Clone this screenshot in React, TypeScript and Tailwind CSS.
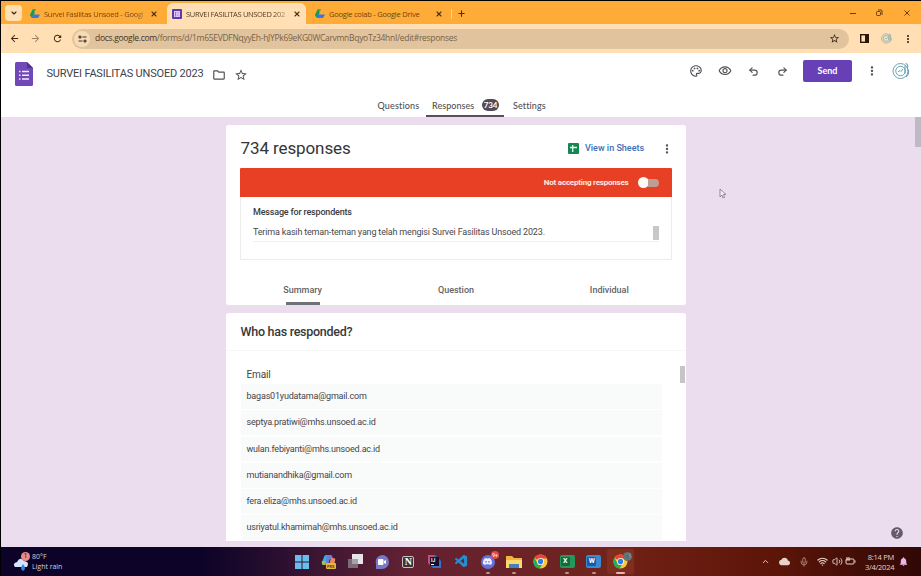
import React from "react";
import { ChevronDown, ChevronUp, Plus, X, Undo2, Redo2, Mic, Wifi, Volume2 } from "lucide-react";
import {
  MdArrowBack,
  MdArrowForward,
  MdRefresh,
  MdStarBorder,
  MdMoreVert,
  MdOutlinePalette,
  MdOutlineVisibility,
  MdOutlineFolder,
  MdHelp,
  MdNotifications,
  MdCloud,
} from "react-icons/md";
import { SiDiscord } from "react-icons/si";
import { VscVscode } from "react-icons/vsc";

const emails = [
  "bagas01yudatama@gmail.com",
  "septya.pratiwi@mhs.unsoed.ac.id",
  "wulan.febiyanti@mhs.unsoed.ac.id",
  "mutianandhika@gmail.com",
  "fera.eliza@mhs.unsoed.ac.id",
  "usriyatul.khamimah@mhs.unsoed.ac.id",
];

function DriveIcon() {
  return (
    <svg className="h-[9px] w-[10px] shrink-0" viewBox="0 0 20 18">
      <path d="M6 0h6L8 10l-5 7-3-5z" fill="#58a83f" />
      <path d="M6 0l-6 12 3 5 6-8z" fill="#159957" />
      <path d="M6 11h14l-4 7H3z" fill="#3478e5" />
    </svg>
  );
}

function FormsFavicon() {
  return (
    <svg className="size-[10px] shrink-0" viewBox="0 0 20 20">
      <rect width="20" height="20" rx="2" fill="#6338ad" />
      <rect x="4" y="4" width="12" height="12" fill="#d9cbf2" />
      <path d="M7 6v9" stroke="#7c58bd" strokeWidth="1.5" />
      <path d="M9 7h6M9 10h6M9 13h6" stroke="#a88bd5" />
    </svg>
  );
}

function SiteSettingsIcon() {
  return (
    <svg className="h-[8px] w-[9px]" viewBox="0 0 18 16" fill="none" stroke="#4a3826" strokeWidth="2.4">
      <circle cx="4" cy="4" r="2" />
      <path d="M9 4h8M1 12h8" />
      <circle cx="14" cy="12" r="2" />
    </svg>
  );
}

function ProfileIcon({ className }: { className: string }) {
  return (
    <svg className={className} viewBox="0 0 36 36" fill="none" stroke="#6aa3b4">
      <circle cx="17" cy="18" r="15" strokeWidth="2" />
      <circle cx="17" cy="18" r="9.5" strokeWidth="2" />
      <path d="M12 20l4-3 2 2 4-5" strokeWidth="2" />
      <path d="M27 3c5 1 6 6 3 9M31 14c4 4 3 12-3 16M26 7v16" strokeWidth="2.2" />
    </svg>
  );
}

function BrowserTabs() {
  return (
    <div className="flex h-[23px] shrink-0 items-end bg-[#ffab37] text-[7.500px]/[10px] text-[#70430e]">
      <div className="mb-[3px] ml-1 flex h-4 w-[17px] items-center justify-center rounded-[4px] bg-[#ffdfb3]">
        <ChevronDown size={8} strokeWidth={3.5} color="#3a2816" />
      </div>
      <div className="ml-[7px] flex h-[21px] w-[138px] items-center pl-px">
        <DriveIcon />
        <span className="ml-[4px] w-[101px] whitespace-nowrap bg-gradient-to-r from-[#70430e] from-90% to-[#c58a42] bg-clip-text font-['Open_Sans',sans-serif] tracking-[-0.24px] text-transparent">
          Survei Fasilitas Unsoed - Googl
        </span>
        <X className="ml-[5px]" size={8} strokeWidth={3.2} color="#503010" />
      </div>
      <div className="flex h-[21px] w-[139px] items-center rounded-t-[6px] bg-[#ffdfb3] pl-[5px]">
        <FormsFavicon />
        <span className="ml-1 w-[102px] whitespace-nowrap bg-gradient-to-r from-[#4b3824] from-85% to-[#c9ac86] bg-clip-text font-['Open_Sans',sans-serif] tracking-[-0.34px] text-transparent">
          SURVEI FASILITAS UNSOED 202
        </span>
        <X className="ml-[5px]" size={8} strokeWidth={3.2} color="#503010" />
      </div>
      <div className="flex h-[21px] items-center pl-[9px]">
        <DriveIcon />
        <span className="ml-1 w-[101px] whitespace-nowrap font-['Open_Sans',sans-serif] tracking-[-0.23px]">
          Google colab - Google Drive
        </span>
        <X className="ml-[5px]" size={8} strokeWidth={3.2} color="#503010" />
        <div className="ml-2 h-[10px] w-px bg-[#ffd28f]" />
        <Plus className="ml-[5px]" size={9} strokeWidth={3} color="#503010" />
      </div>
      <svg className="mr-[9px] mb-[7px] ml-auto h-2 w-[62px]" viewBox="0 0 62 8" fill="none" stroke="#6b3b06">
        <path d="M0 4.500h6" />
        <rect x="26.500" y="2.500" width="4" height="4" rx="1" />
        <path d="M28 1h3q1 0 1 1v4M54.500 1.500l5 5m0-5l-5 5" />
      </svg>
    </div>
  );
}

function AddressBar() {
  return (
    <div className="flex h-[29px] shrink-0 items-center bg-[#ffdfb3] pl-2 text-[#3c2a17]">
      <MdArrowBack size={11} />
      <MdArrowForward className="ml-[10px] opacity-50" size={11} />
      <MdRefresh className="ml-[11px]" size={11} />
      <div className="ml-[9px] flex h-5 w-[777px] items-center rounded-full bg-[#e1c49e] pr-[9px] pl-[2px]">
        <div className="flex size-4 items-center justify-center rounded-full bg-[#f6dbb5]">
          <SiteSettingsIcon />
        </div>
        <span className="ml-[5px] whitespace-nowrap font-['Open_Sans',sans-serif] text-[8.500px] tracking-[-0.3px] text-[#7b6243]">
          <span className="text-[#44321e]">docs.google.com</span>
          /forms/d/1m65EVDFNqyyEh-hJYPk69eKG0WCarvmnBqyoTz34hnI/edit#responses
        </span>
        <MdStarBorder className="ml-auto" size={11} />
      </div>
      <svg className="ml-[11px] h-[9px] w-[9px]" viewBox="0 0 9 9">
        <rect x=".7" y=".7" width="7.600" height="7.600" fill="none" stroke="#281708" strokeWidth="1.400" />
        <path d="M5 0h4v9H5z" fill="#281708" />
      </svg>
      <ProfileIcon className="ml-3 size-[11px]" />
      <MdMoreVert className="ml-[10px]" size={12} />
    </div>
  );
}

function FormHeader() {
  return (
    <header className="flex h-16 shrink-0 flex-col bg-white text-[#505256]">
      <div className="flex h-[44px] items-start">
        <svg className="mt-[9px] ml-[14px] h-6 w-[18px]" viewBox="0 0 18 24">
          <path d="M1.500 0H12l6 6v16.500q0 1.500-1.500 1.500h-15Q0 24 0 22.500v-21Q0 0 1.500 0z" fill="#7048b8" />
          <path d="M12 0l6 6h-6z" fill="#50318c" />
          <path d="M7 9.500h7M7 13.300h7M7 17h7" stroke="#f3eafa" strokeWidth="1.400" />
          <path d="M4 9.500h1.500M4 13.300h1.500M4 17h1.500" stroke="#f3eafa" strokeWidth="1.400" />
        </svg>
        <h1 className="mt-[13px] ml-[13.500px] w-[159px] whitespace-nowrap font-['Roboto',sans-serif] text-[11px]/[16px] tracking-[-0.2px] text-[#3f4145]">
          SURVEI FASILITAS UNSOED 2023
        </h1>
        <MdOutlineFolder className="mt-[15px] ml-[6.500px]" size={14} />
        <MdStarBorder className="mt-[15px] ml-[8px]" size={14} />
        <div className="mt-[7px] ml-auto flex h-[22px] items-center">
          <MdOutlinePalette size={14} />
          <MdOutlineVisibility className="ml-[15px]" size={14} />
          <Undo2 className="ml-4" size={11} strokeWidth={2.5} />
          <Redo2 className="ml-[18px]" size={11} strokeWidth={2.5} />
          <button className="ml-[15px] h-[22px] w-[49px] rounded-[2px] bg-[#6840b5] font-['Lato',sans-serif] text-[9px] font-bold text-white">
            Send
          </button>
          <MdMoreVert className="ml-[13px]" size={14} />
          <ProfileIcon className="mr-[11px] ml-[13px] size-[18px]" />
        </div>
      </div>
      <nav className="ml-[376.500px] flex h-5 font-['Lato',sans-serif] text-[9px]/[17px] font-medium">
        <span className="w-[48.500px] tracking-[0.16px]">Questions</span>
        <span className="flex h-5 w-[78px] justify-between rounded-t-[2px] border-b-2 border-[#57515f] pr-[5px] pl-[6px]">
          <span className="tracking-[0.05px]">Responses</span>
          <span className="mt-[2px] h-3 w-[17px] rounded-full bg-[#514c57] text-center text-[8px]/[12px] font-bold tracking-[-0.2px] text-white">
            734
          </span>
        </span>
        <span className="ml-[9px] tracking-[0.1px]">Settings</span>
      </nav>
    </header>
  );
}

function ResponsesCard() {
  return (
    <section className="flex h-[180px] w-[460px] shrink-0 flex-col rounded-[3px] bg-white px-[14px]">
      <div className="flex h-[43px] items-center">
        <h2 className="mt-1 ml-[0.500px] text-[17px] tracking-[-0.1px] text-[#333538]">734 responses</h2>
        <svg className="mt-1 ml-auto size-[11px]" viewBox="0 0 11 11">
          <rect width="11" height="11" rx="1" fill="#168653" />
          <path d="M2 4.500h7M4.700 2v7" stroke="#e8f7ef" strokeWidth="1.300" />
        </svg>
        <span className="mt-1 ml-[6px] w-[58px] whitespace-nowrap text-[9px] font-medium text-[#3d6eb7]">
          View in Sheets
        </span>
        <MdMoreVert className="mt-1 -mr-[2px] ml-[17px]" size={14} color="#555" />
      </div>
      <div className="flex h-[92px] flex-col">
        <div className="flex h-[29px] items-center justify-end rounded-t-[1px] bg-[#e74024] pr-[12px]">
          <span className="text-[8px] font-bold tracking-[-0.21px] text-[#ffe9e2]">Not accepting responses</span>
          <div className="ml-[9.500px] flex h-[11px] w-[22px] items-center">
            <div className="size-[11px] rounded-full bg-[#fff9f6]" />
            <div className="-ml-px h-[8px] w-[11px] rounded-r-full bg-[#bd9d96]" />
          </div>
        </div>
        <div className="flex grow flex-col border border-t-0 border-[#ececec] px-3 pt-[9px]">
          <h3 className="text-[9px]/[13px] font-medium tracking-[-0.18px] text-[#3a3b3d]">Message for respondents</h3>
          <div className="mt-1 flex h-[19px] items-center justify-between border-b border-[#f0f0f0] pt-[2px]">
            <span className="text-[9px] tracking-[-0.17px] text-[#48494b]">
              Terima kasih teman-teman yang telah mengisi Survei Fasilitas Unsoed 2023.
            </span>
            <div className="h-[14px] w-[6px] bg-[#c8c8c8]" />
          </div>
        </div>
      </div>
      <div className="mt-4 -ml-[14px] grid h-[29px] w-[460px] grid-cols-3 pt-[2px] text-center text-[9px]/[24px] font-medium text-[#626367]">
        <span className="flex justify-center">
          <span className="h-[27px] w-[34px] border-b-[3px] border-[#717077]">
            <span className="-mx-2">Summary</span>
          </span>
        </span>
        <span>Question</span>
        <span>Individual</span>
      </div>
    </section>
  );
}

function RespondentsCard() {
  return (
    <section className="mt-2 flex h-[228px] w-[460px] shrink-0 flex-col rounded-t-[3px] bg-white">
      <h2 className="h-[38px] border-b border-[#f7f7f7] pl-[14.500px] text-[12.500px]/[38px] font-medium tracking-[-0.28px] text-[#37383b]">
        Who has responded?
      </h2>
      <div className="flex h-[33px] items-center justify-between pt-[14px]">
        <h3 className="pl-[20.500px] text-[10px]/[13px] tracking-[-0.15px] text-[#424346]">Email</h3>
        <div className="mr-[1px] h-[17px] w-[5px] bg-[#c5c5c5]" />
      </div>
      <ul className="ml-[15px] h-[157px] w-[421px] overflow-hidden text-[9px]/[24.800px] tracking-[-0.19px] text-[#444548]">
        {emails.map((email) => (
          <li key={email} className="mb-[1.500px] h-[24.800px] bg-[#f9fafa] pl-[5.500px]">
            {email}
          </li>
        ))}
      </ul>
    </section>
  );
}

function ChromeIcon() {
  return (
    <svg className="size-[15px]" viewBox="0 0 30 30">
      <circle cx="15" cy="15" r="14" fill="#fac938" />
      <path d="M15 15L3 8C9-2 23-1 28 9H15z" fill="#e84539" />
      <path d="M3 8l8 14 7 0-5 7C2 28-2 17 3 8z" fill="#2aab55" />
      <circle cx="15" cy="15" r="7" fill="#f2f5fb" />
      <circle cx="15" cy="15" r="5.300" fill="#367ddd" />
    </svg>
  );
}

function ExcelIcon() {
  return (
    <div className="flex h-[13px] w-[15px] items-center rounded-[2px] bg-[#23975c] pl-px">
      <span className="flex size-[9px] items-center justify-center rounded-[1px] bg-[#126b3c] text-[7px]/[9px] font-bold">X</span>
    </div>
  );
}

function WordIcon() {
  return (
    <div className="flex h-[13px] w-[15px] items-center rounded-[2px] bg-[#398ad2] pl-px">
      <span className="flex size-[9px] items-center justify-center rounded-[1px] bg-[#1959ac] text-[7px]/[9px] font-bold">W</span>
    </div>
  );
}

function TaskItem({ children, active, dot }: { children: React.ReactNode; active?: boolean; dot?: boolean }) {
  return (
    <div
      className={
        active
          ? "relative flex h-[25px] w-[26.500px] items-center justify-center rounded-[3px] bg-[#7f2e20]"
          : "relative flex h-[25px] w-[26.500px] items-center justify-center"
      }
    >
      {children}
      {dot && (
        <span
          className={
            active
              ? "absolute bottom-0 h-[2px] w-[9px] rounded bg-[#e8b4ae]"
              : "absolute bottom-0 h-[2px] w-1 rounded bg-[#b8948e]"
          }
        />
      )}
    </div>
  );
}

function Taskbar() {
  return (
    <footer className="flex h-[29px] shrink-0 items-center bg-[#5c1508] text-white">
      <div className="flex h-full w-[287px] items-center bg-gradient-to-r from-[#0d0328] from-70% to-[#2e1030] pl-3">
        <div className="relative h-5 w-[17px]">
          <svg className="mt-1 h-4 w-[17px]" viewBox="0 0 17 16">
            <path d="M2 11Q-1 7 4 6Q7 0 11 5Q17 6 14 11Z" fill="#d6e2ff" />
            <path d="M10 8q4 5 0 7-4-2 0-7z" fill="#3285db" />
          </svg>
          <span className="absolute top-0 right-0 flex size-[9px] items-center justify-center rounded-full bg-[#eb8986] text-[7px]/[9px] text-[#3b1227]">
            1
          </span>
        </div>
        <div className="ml-[2px] font-['Open_Sans',sans-serif] text-[7px]/[10px] text-[#d2cfdb]">
          <div>80°F</div>
          <div className="tracking-[-0.03px]">Light rain</div>
        </div>
      </div>
      <div className="flex h-full items-center bg-gradient-to-r from-[#301131] via-[#642132] via-35% to-[#722417] pl-px">
        <TaskItem>
          <svg className="size-[14px]" viewBox="0 0 14 14" fill="#68bfee">
            <path d="M0 0h6.500v6.500H0zM7.500 0H14v6.500H7.500zM0 7.500h6.500V14H0zM7.500 7.500H14V14H7.500z" />
          </svg>
        </TaskItem>
        <TaskItem>
          <svg className="size-[15px]" viewBox="0 0 15 15">
            <path d="M5 1h3L5 11H3Q0 11 1 8L3 3q.6-2 2-2z" fill="#35b3d2" />
            <path d="M6 1h4q1 0 1.500 2l.5 2H9L7 11H4z" fill="#6d7be0" />
            <path d="M10 4h2q3 0 2 3l-1 4H8z" fill="#e58a5a" />
            <path d="M1 7l4 0-1 4H3Q0 11 1 7z" fill="#9bc255" />
            <rect x="5" y="9" width="10" height="6" rx="1" fill="#e9b63d" />
            <text x="6" y="14" fontFamily="Roboto, sans-serif" fontSize="4" fontWeight="700" fill="#583b28">PRE</text>
          </svg>
        </TaskItem>
        <TaskItem>
          <svg className="size-[15px]" viewBox="0 0 15 15">
            <path d="M4 0h11v10H4z" fill="#e9e2e7" />
            <path d="M0 5h10v9H0z" fill="#796d77" />
            <path d="M4 5h6v5H4z" fill="#aaa0a9" />
          </svg>
        </TaskItem>
        <TaskItem>
          <svg className="size-[14px]" viewBox="0 0 14 14">
            <path d="M7 0a7 7 0 1 1 0 14H1V9A7 7 0 0 1 7 0" fill="#7779c7" />
            <rect x="3" y="4" width="5.500" height="6" rx="1" fill="#fff" />
            <path d="M9 6l2-1v4L9 8z" fill="#fff" />
          </svg>
        </TaskItem>
        <TaskItem>
          <div className="size-3 rounded-[2px] border border-[#c7c0bf] bg-[#3c3434] text-center font-['Liberation_Serif',serif] text-[10px]/[10px] font-bold">N</div>
        </TaskItem>
        <TaskItem>
          <svg className="size-[13px]" viewBox="0 0 13 13">
            <path d="M0 0h7l6 6v7H5L0 8z" fill="#376fcb" />
            <path d="M0 0h6L4 12 0 8z" fill="#d04970" />
            <rect x="2" y="2" width="9" height="9" fill="#18102a" />
            <text x="3" y="7" fontFamily="Roboto, sans-serif" fontSize="5" fontWeight="700" fill="#fff">IJ</text>
            <path d="M3 9.500h3" stroke="#fff" />
          </svg>
        </TaskItem>
        <TaskItem><VscVscode size={15} color="#248fd4" /></TaskItem>
        <TaskItem dot>
          <div className="flex size-[14px] items-center justify-center rounded-full bg-[#6572d6]">
            <SiDiscord size={9} color="#eef0ff" />
          </div>
          <span className="absolute top-[2px] right-[2px] size-[8px] rounded-full bg-[#e54947] text-center text-[5px]/[8px]">9+</span>
        </TaskItem>
        <TaskItem dot>
          <svg className="h-[14px] w-4" viewBox="0 0 16 14">
            <path d="M0 1h6l2 2h8v10H0z" fill="#f0b53d" />
            <path d="M0 5h16v8H0z" fill="#ffd86d" />
            <path d="M3 9h10v4H3z" fill="#3e83bd" />
          </svg>
        </TaskItem>
        <TaskItem><ChromeIcon /></TaskItem>
        <TaskItem dot><ExcelIcon /></TaskItem>
        <TaskItem dot><WordIcon /></TaskItem>
        <TaskItem active dot>
          <ChromeIcon />
          <ProfileIcon className="absolute top-[3px] right-[2px] size-[9px] rounded-full bg-[#625e59]" />
        </TaskItem>
      </div>
      <div className="flex h-full grow items-center justify-end bg-gradient-to-r from-[#702015] via-[#5c1508] to-[#300806] pr-[12px] text-[#e6d2ca]">
        <ChevronUp size={9} strokeWidth={2.5} />
        <MdCloud className="ml-[9px]" size={11} />
        <Mic className="ml-[9px]" size={10} color="#bd9289" />
        <Wifi className="ml-[8px]" size={11} strokeWidth={2.5} />
        <Volume2 className="ml-1" size={11} />
        <svg className="ml-[2px] h-[9px] w-[11px]" viewBox="0 0 11 9" fill="none" stroke="#e6d2ca">
          <rect x="1" y="2" width="8" height="5" rx="1" />
          <path d="M10 3.500v2M2 0v3M4 0v3M1 3h4" />
        </svg>
        <div className="ml-[9px] w-[29px] whitespace-nowrap text-right font-['Open_Sans',sans-serif] text-[7.500px]/[10px] tracking-[-0.25px]">
          <div>8:14 PM</div>
          <div>3/4/2024</div>
        </div>
        <MdNotifications className="ml-[4px]" size={11} color="#eeb5e6" />
      </div>
    </footer>
  );
}

export default function App() {
  return (
    <div className="relative flex h-[576px] w-[921px] flex-col overflow-hidden border-t border-l border-black bg-white font-['Roboto',sans-serif]">
      <BrowserTabs />
      <AddressBar />
      <FormHeader />
      <main className="flex h-[430px] shrink-0 bg-[#ecddee]">
        <div className="ml-[225px] flex w-[460px] flex-col pt-2">
          <ResponsesCard />
          <RespondentsCard />
        </div>
        <div className="ml-auto flex flex-col items-end justify-between">
          <div className="h-[30px] w-[6px] bg-[#c0b8c4]" />
          <MdHelp className="mr-[17px] mb-[7px]" size={14} color="#665b6c" />
        </div>
      </main>
      <Taskbar />
      <svg className="absolute top-[187px] left-[718px] h-[11px] w-[7px]" viewBox="0 0 7 11">
        <path d="M1 1v8l2-2 1 3 1.500-.5-1-3H7z" fill="#f4ebf6" stroke="#827489" strokeWidth=".8" />
      </svg>
    </div>
  );
}
